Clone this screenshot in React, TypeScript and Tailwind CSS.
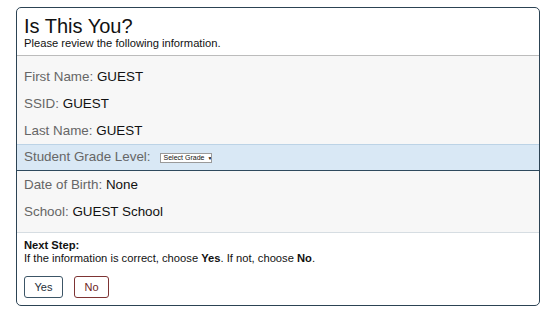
import React from "react";

const rows: { label: string; value: string }[] = [
  { label: "First Name:", value: "GUEST" },
  { label: "SSID:", value: "GUEST" },
  { label: "Last Name:", value: "GUEST" },
];

const rowsAfter: { label: string; value: string }[] = [
  { label: "Date of Birth:", value: "None" },
  { label: "School:", value: "GUEST School" },
];

function InfoRow({ label, value }: { label: string; value: string }) {
  return (
    <div className="h-[27px] leading-[27px] pl-[7px] text-[13.4px]">
      <span className="text-[#666]">{label}</span>{" "}
      <span className="text-[#111]">{value}</span>
    </div>
  );
}

export default function App() {
  return (
    <div
      className="w-[550px] h-[316px] bg-white pt-[7px] pl-[16px]"
      style={{ fontFamily: '"Liberation Sans", Arial, sans-serif' }}
    >
      <div className="w-[524px] h-[299px] border border-[#2c4354] rounded-[5px] bg-white overflow-hidden">
        {/* header */}
        <div className="pl-[7px] pt-[7px] pb-[5px] border-b border-[#bcbcbc]">
          <div className="text-[20px] leading-[22px] text-[#111]">Is This You?</div>
          <div className="text-[11.2px] leading-[13px] text-[#111]">
            Please review the following information.
          </div>
        </div>

        {/* details */}
        <div className="bg-[#f7f7f7] pt-[7px] pb-[7px] border-b border-[#d6dde2]">
          {rows.map((r) => (
            <InfoRow key={r.label} label={r.label} value={r.value} />
          ))}
          <div className="h-[27px] flex items-center pl-[7px] text-[13.4px] bg-[#d9e8f5] border-t border-[#bcd3e6] border-b border-b-[#2f4a5e]">
            <span className="text-[#666]">Student Grade Level:</span>
            <span className="ml-[9px] inline-flex items-center gap-[3px] whitespace-nowrap overflow-hidden w-[52px] h-[10px] pl-[3px] bg-white border border-[#9a9a9a] text-[7px] leading-[8px] text-[#111]">
              Select Grade
              <span className="text-[5px]">▼</span>
            </span>
          </div>
          {rowsAfter.map((r) => (
            <InfoRow key={r.label} label={r.label} value={r.value} />
          ))}
        </div>

        {/* footer */}
        <div className="pl-[7px] pt-[6px] text-[11.2px] leading-[13px] text-[#111]">
          <div className="font-bold">Next Step:</div>
          <div>
            If the information is correct, choose <span className="font-bold">Yes</span>. If
            not, choose <span className="font-bold">No</span>.
          </div>
          <div className="flex gap-[11px] mt-[11px]">
            <button className="w-[39px] h-[22px] rounded-[3px] border border-[#3c5566] bg-white text-[11px] text-[#1e2d38]">
              Yes
            </button>
            <button className="w-[35px] h-[22px] rounded-[3px] border border-[#7d3434] bg-white text-[11px] text-[#6e2424]">
              No
            </button>
          </div>
        </div>
      </div>
    </div>
  );
}
